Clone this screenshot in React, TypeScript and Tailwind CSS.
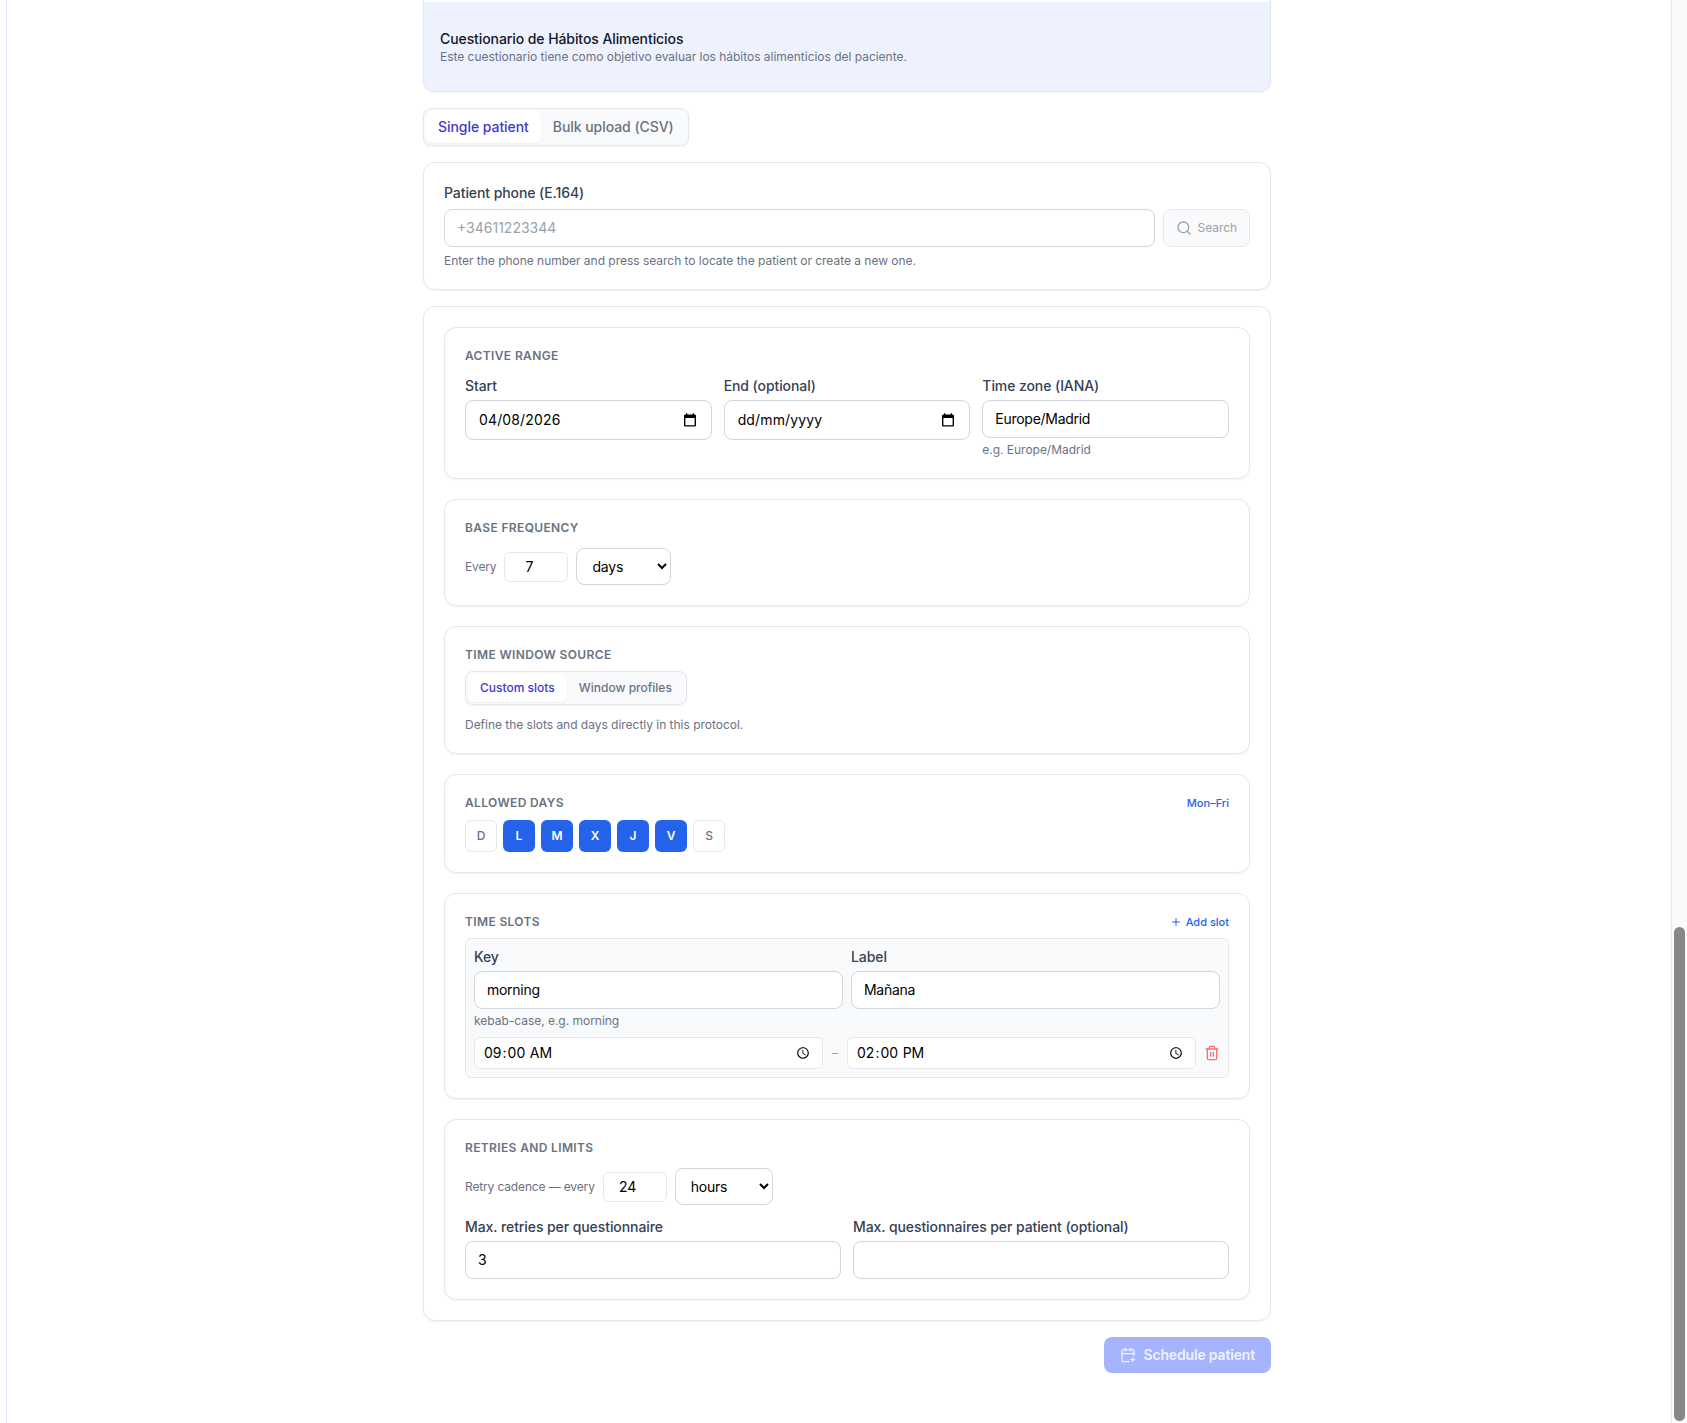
import React from 'react';
import { Search, Plus, Trash2, CalendarPlus } from 'lucide-react';

const inputBase = 'w-full rounded-lg border border-gray-300 bg-white px-3 text-sm text-black outline-none placeholder:text-gray-400';
const valueInput = `${inputBase} h-[38px] pb-px tracking-[-0.02em]`;

const SectionTitle = ({ children }: { children: React.ReactNode }) => (
  <h3 className="text-xs leading-4 font-semibold uppercase tracking-[0.03em] text-gray-500">{children}</h3>
);

const Section = ({ children }: { children: React.ReactNode }) => (
  <section className="rounded-xl border border-gray-200 bg-white p-5 shadow-xs">{children}</section>
);

const FieldLabel = ({ children, className = 'mb-1' }: { children: React.ReactNode; className?: string }) => (
  <label className={`block text-sm leading-5 font-medium tracking-[-0.006em] text-gray-700 ${className}`}>{children}</label>
);

const CalendarGlyph = () => (
  <svg width="16" height="16" viewBox="0 0 16 16" className="shrink-0 text-black">
    <path
      fill="currentColor"
      d="M12.6 2.6H12V1.3h-1.3v1.3H5.3V1.3H4v1.3h-.6c-.8 0-1.4.6-1.4 1.4v9.2c0 .8.6 1.4 1.4 1.4h9.2c.8 0 1.4-.6 1.4-1.4V4c0-.8-.6-1.4-1.4-1.4zm0 10.6H3.4V5.9h9.2v7.3z"
    />
  </svg>
);

const DateField = ({ value }: { value: string }) => (
  <div className="flex h-10 items-center rounded-lg border border-gray-300 bg-white pl-[13px] pr-[13px]">
    <input
      type="text"
      defaultValue={value}
      className="min-w-0 flex-1 text-sm text-black outline-none tracking-[0.01em]"
    />
    <CalendarGlyph />
  </div>
);

const TimeField = ({ value }: { value: string }) => (
  <input
    type="time"
    defaultValue={value}
    className="h-8 min-w-0 flex-1 rounded-md border border-gray-200 bg-white px-2 text-sm tracking-normal text-black outline-none"
  />
);

const SegTabs = ({ active, other, small }: { active: string; other: string; small?: boolean }) => (
  <div
    className={`inline-flex rounded-lg border border-gray-200 bg-gray-50 p-[2px] shadow-xs ${
      small ? 'h-[34px] text-xs tracking-normal' : 'h-[38px] text-sm tracking-[-0.004em]'
    }`}
  >
    <button className="rounded-md bg-white px-3 font-medium text-[#4338ca] shadow-xs">{active}</button>
    <button className="rounded-md px-3 font-medium text-gray-500">{other}</button>
  </div>
);

const NumberInline = ({ value }: { value: string }) => (
  <input
    type="text"
    defaultValue={value}
    className="h-[30px] w-16 rounded-md border border-gray-200 bg-white pr-[14px] text-center text-sm text-black outline-none"
  />
);

const UnitSelect = ({ value, width }: { value: string; width: string }) => (
  <select
    defaultValue={value}
    className={`h-[37px] ${width} rounded-lg border border-gray-300 bg-white pl-[11px] text-sm tracking-[-0.015em] text-black outline-none`}
  >
    <option value={value}>{value}</option>
  </select>
);

const days = [
  { d: 'D', on: false },
  { d: 'L', on: true },
  { d: 'M', on: true },
  { d: 'X', on: true },
  { d: 'J', on: true },
  { d: 'V', on: true },
  { d: 'S', on: false },
];

export default function App() {
  return (
    <div className="flex h-[1423px] overflow-hidden bg-white font-['Inter',sans-serif] tracking-[-0.0015em] antialiased">
      <div className="w-[7px] shrink-0 border-r border-indigo-100 bg-white" />

      <main className="flex min-w-0 flex-1 justify-center pl-4">
        <div className="w-[848px] shrink-0">
          <div className="h-[2px] border-x border-gray-200 bg-white" />
          <div className="rounded-b-xl border border-t-0 border-gray-200 bg-[#eef2ff] px-4 pt-[27px] pb-[26px] shadow-xs">
            <h2 className="text-sm leading-5 font-medium tracking-[-0.006em] text-gray-900">Cuestionario de Hábitos Alimenticios</h2>
            <p className="text-xs leading-4 text-gray-500">
              Este cuestionario tiene como objetivo evaluar los hábitos alimenticios del paciente.
            </p>
          </div>

          <div className="mt-4">
            <SegTabs active="Single patient" other="Bulk upload (CSV)" />
          </div>

          <div className="mt-4 rounded-xl border border-gray-200 bg-white p-5 shadow-xs">
            <FieldLabel className="mb-1.5">Patient phone (E.164)</FieldLabel>
            <div className="flex gap-2">
              <input type="text" placeholder="+34611223344" className={`${inputBase} h-[38px] flex-1 pb-px tracking-normal`} />
              <button className="flex h-[38px] items-center gap-1.5 rounded-lg border border-gray-200 bg-gray-50 px-3 text-xs tracking-[-0.006em] text-gray-400">
                <Search className="h-4 w-4" />
                Search
              </button>
            </div>
            <p className="mt-1.5 text-xs leading-4 text-gray-500">
              Enter the phone number and press search to locate the patient or create a new one.
            </p>
          </div>

          <div className="mt-4 flex flex-col gap-5 rounded-xl border border-gray-200 bg-white p-5 shadow-xs">
            <Section>
              <SectionTitle>Active range</SectionTitle>
              <div className="mt-3 grid grid-cols-3 gap-3">
                <div>
                  <FieldLabel>Start</FieldLabel>
                  <DateField value="04/08/2026" />
                </div>
                <div>
                  <FieldLabel>End (optional)</FieldLabel>
                  <DateField value="dd/mm/yyyy" />
                </div>
                <div>
                  <FieldLabel>Time zone (IANA)</FieldLabel>
                  <input type="text" defaultValue="Europe/Madrid" className={valueInput} />
                  <p className="mt-1 text-xs leading-4 text-gray-500">e.g. Europe/Madrid</p>
                </div>
              </div>
            </Section>

            <Section>
              <SectionTitle>Base frequency</SectionTitle>
              <div className="mt-3 flex items-center gap-2">
                <span className="text-xs tracking-[-0.012em] text-gray-500">Every</span>
                <NumberInline value="7" />
                <UnitSelect value="days" width="w-[95px]" />
              </div>
            </Section>

            <Section>
              <SectionTitle>Time window source</SectionTitle>
              <div className="mt-2">
                <SegTabs active="Custom slots" other="Window profiles" small />
              </div>
              <p className="mt-3 text-xs leading-4 text-gray-500">Define the slots and days directly in this protocol.</p>
            </Section>

            <Section>
              <div className="flex items-center justify-between">
                <SectionTitle>Allowed days</SectionTitle>
                <button className="text-[11px] leading-4 font-medium tracking-normal text-[#2563eb]">Mon–Fri</button>
              </div>
              <div className="mt-[9px] flex gap-1.5">
                {days.map((item) => (
                  <button
                    key={item.d}
                    className={
                      item.on
                        ? 'h-8 w-8 rounded-md bg-[#2563eb] text-xs font-semibold text-white'
                        : 'h-8 w-8 rounded-md border border-gray-200 bg-white text-xs font-medium text-gray-500'
                    }
                  >
                    {item.d}
                  </button>
                ))}
              </div>
            </Section>

            <Section>
              <div className="flex items-center justify-between">
                <SectionTitle>Time slots</SectionTitle>
                <button className="flex items-center gap-1 text-[11px] leading-4 font-medium tracking-normal text-[#2563eb]">
                  <Plus className="h-3 w-3" />
                  Add slot
                </button>
              </div>
              <div className="mt-2 rounded-md border border-gray-200 bg-gray-50 p-2">
                <div className="grid grid-cols-2 gap-2">
                  <div>
                    <FieldLabel>Key</FieldLabel>
                    <input type="text" defaultValue="morning" className={valueInput} />
                    <p className="mt-1 text-xs leading-4 text-gray-500">kebab-case, e.g. morning</p>
                  </div>
                  <div>
                    <FieldLabel>Label</FieldLabel>
                    <input type="text" defaultValue="Mañana" className={valueInput} />
                  </div>
                </div>
                <div className="mt-2 flex items-center gap-2">
                  <TimeField value="09:00" />
                  <span className="w-2 text-center text-xs text-gray-400">–</span>
                  <TimeField value="14:00" />
                  <button className="flex h-6 w-4 items-center justify-center text-[#f87171]">
                    <Trash2 className="h-4 w-4 shrink-0" />
                  </button>
                </div>
              </div>
            </Section>

            <Section>
              <SectionTitle>Retries and limits</SectionTitle>
              <div className="mt-3 flex items-center gap-2">
                <span className="text-xs tracking-[-0.012em] text-gray-500">Retry cadence — every</span>
                <NumberInline value="24" />
                <UnitSelect value="hours" width="w-[98px]" />
              </div>
              <div className="mt-3 grid grid-cols-2 gap-3">
                <div>
                  <FieldLabel>Max. retries per questionnaire</FieldLabel>
                  <input type="text" defaultValue="3" className={valueInput} />
                </div>
                <div>
                  <FieldLabel>Max. questionnaires per patient (optional)</FieldLabel>
                  <input type="text" className={valueInput} />
                </div>
              </div>
            </Section>
          </div>

          <div className="mt-4 flex justify-end">
            <button className="flex h-9 items-center gap-[7px] rounded-lg bg-[#a5b4fc] px-4 text-sm font-semibold tracking-[-0.012em] text-[#eef2ff]">
              <CalendarPlus className="h-4 w-4" />
              Schedule patient
            </button>
          </div>
        </div>
      </main>

      <div className="flex w-4 shrink-0 flex-col justify-end border-l border-gray-200 bg-[#fafafa] px-[2px] pb-[2px]">
        <div className="h-[494px] rounded-full bg-[#888888]" />
      </div>
    </div>
  );
}
